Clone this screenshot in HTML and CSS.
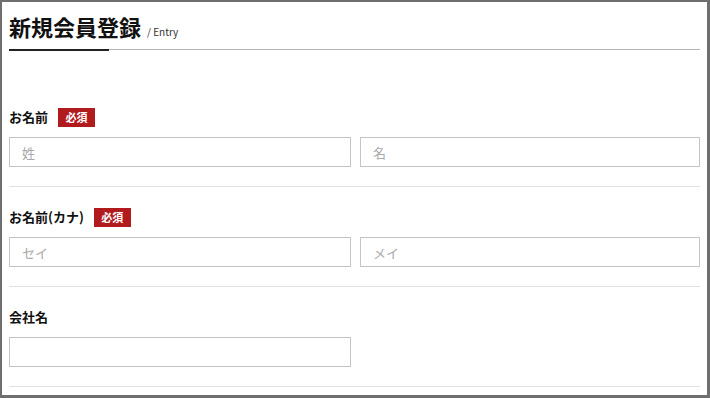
FILE: index.html
```html
<!DOCTYPE html>
<html lang="ja">
<head>
  <meta charset="UTF-8">
  <title>新規会員登録</title>
  <link rel="stylesheet" href="styles.css">
</head>
<body>
  <div class="frame">
    <div class="page-head">
      <h1>新規会員登録</h1>
      <span class="sub">/ Entry</span>
    </div>

    <form class="entry-form">
      <div class="field first">
        <div class="label-row">
          <label>お名前</label>
          <span class="req">必須</span>
        </div>
        <div class="inputs">
          <input type="text" placeholder="姓">
          <input type="text" placeholder="名">
        </div>
      </div>

      <div class="field">
        <div class="label-row">
          <label>お名前(カナ)</label>
          <span class="req">必須</span>
        </div>
        <div class="inputs">
          <input type="text" placeholder="セイ">
          <input type="text" placeholder="メイ">
        </div>
      </div>

      <div class="field">
        <div class="label-row">
          <label>会社名</label>
        </div>
        <div class="inputs">
          <input type="text">
        </div>
      </div>
    </form>
  </div>
</body>
</html>
```

FILE: styles.css
```css
html, body {
  margin: 0;
  height: 100%;
}

body {
  font-family: "Noto Sans CJK JP", "Noto Sans", sans-serif;
  color: #111;
  background: #fff;
}

.frame {
  box-sizing: border-box;
  height: 398px;
  border-style: solid;
  border-color: #6f6f6f;
  border-width: 2px 3px 3px 2px;
  padding: 0 7px 0 7px;
  overflow: hidden;
}

.page-head {
  position: relative;
  display: flex;
  align-items: baseline;
  gap: 6px;
  padding-top: 9px;
  height: 38px;
  border-bottom: 1px solid #b5b5b5;
}

.page-head::after {
  content: "";
  position: absolute;
  left: 0;
  bottom: -2px;
  width: 100px;
  height: 2px;
  background: #222;
}

h1 {
  margin: 0;
  font-size: 22px;
  line-height: 30px;
  font-weight: 700;
}

.sub {
  font-size: 10px;
  color: #333;
}

.entry-form {
  margin: 0;
}

.field {
  padding: 20px 0 19px;
  border-bottom: 1px solid #e2e2e2;
}

.field.first {
  padding-top: 57px;
}

.label-row {
  display: flex;
  align-items: center;
  gap: 10px;
  height: 20px;
  margin-bottom: 10px;
}

.label-row label {
  font-size: 13px;
  font-weight: 700;
  margin-top: -2px;
}

.req {
  display: inline-block;
  width: 37px;
  height: 19px;
  line-height: 19px;
  text-align: center;
  background: #b21b1e;
  color: #fff;
  font-size: 11px;
  font-weight: 700;
}

.inputs {
  display: grid;
  grid-template-columns: 342px 1fr;
  gap: 9px;
}

.inputs input {
  box-sizing: border-box;
  height: 30px;
  margin: 0;
  padding: 0 12px;
  border: 1px solid #c4c4c4;
  font-family: inherit;
  font-size: 13px;
  color: #333;
  outline: none;
}

.inputs input::placeholder {
  color: #a8a8a8;
}
```
